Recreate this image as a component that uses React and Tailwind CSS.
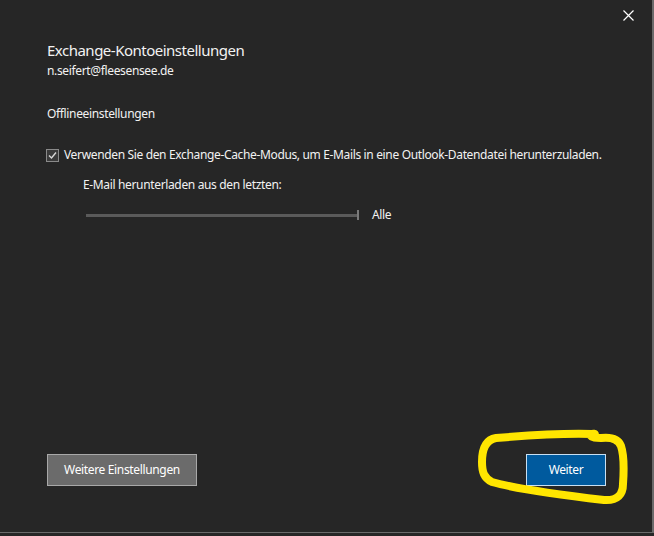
function Annotation() {
  // freehand yellow marker around the primary button
  return (
    <svg
      className="absolute left-0 top-0 pointer-events-none"
      width="654"
      height="536"
      viewBox="0 0 654 536"
    >
      <path
        d="M592 434 C560 433 520 436 496 438 C484 440 482 452 482 462 C482 472 484 478 492 482 C520 490 570 496 604 500 C618 501 623 494 623 484 C624 470 624 455 621 446 C618 438 610 437 601 438 C596 438 592 438 590 435 C588 433 600 434 592 434"
        fill="none"
        stroke="#ffe600"
        strokeWidth="8"
        strokeLinecap="round"
        strokeLinejoin="round"
      />
    </svg>
  )
}

export default function App() {
  return (
    <div
      className="relative w-[654px] h-[536px] bg-[#262626] text-[#f2f2f2] overflow-hidden"
      style={{ fontFamily: '"Segoe UI", "Noto Sans", sans-serif' }}
    >
      <div className="flex flex-col h-[533px] w-[652px] border-b border-[#6a6a6a]">
        {/* title bar */}
        <div className="flex justify-end h-[32px] pr-[18px] pt-[10px]">
          <svg width="11" height="11" viewBox="0 0 11 11">
            <path d="M0.5 0.5 L10.5 10.5 M10.5 0.5 L0.5 10.5" stroke="#ffffff" strokeWidth="1.2" />
          </svg>
        </div>

        <div className="flex flex-col flex-1 pl-[47px]">
          <h1 className="text-[15px] leading-[20px] mt-[8px] tracking-[-0.5px]">Exchange-Kontoeinstellungen</h1>
          <p className="text-[12px] leading-[16px] mt-[3px] tracking-[-0.35px]">n.seifert@fleesensee.de</p>

          <p className="text-[12px] leading-[16px] mt-[27px] tracking-[-0.35px]">Offlineeinstellungen</p>

          <label className="flex items-center gap-[5px] mt-[25px] -ml-[1px] text-[12px] leading-[16px] tracking-[-0.35px]">
            <span className="w-[13px] h-[13px] border border-[#8a8a8a] bg-[#3a3a3a] flex items-center justify-center">
              <svg width="11" height="11" viewBox="0 0 11 11">
                <path d="M2 5.5 L4.5 8 L9 2.5" fill="none" stroke="#d8d8d8" strokeWidth="1.4" />
              </svg>
            </span>
            Verwenden Sie den Exchange-Cache-Modus, um E-Mails in eine Outlook-Datendatei herunterzuladen.
          </label>

          <p className="text-[12px] leading-[16px] mt-[14px] ml-[36px] tracking-[-0.35px]">E-Mail herunterladen aus den letzten:</p>

          <div className="flex items-center mt-[14px] ml-[39px]">
            <div className="relative w-[273px] h-[10px] flex items-center">
              <div className="w-full h-[3px] bg-[#5a5a5a]" />
              <div className="absolute right-0 top-0 w-[2px] h-[10px] bg-[#7a7a7a]" />
            </div>
            <span className="text-[12px] leading-[16px] ml-[13px] tracking-[-0.35px]">Alle</span>
          </div>

          <div className="flex-1" />

          <div className="flex items-center justify-between pr-[46px] mb-[46px]">
            <button className="w-[150px] h-[32px] bg-[#6b6b6b] border border-[#a8a8a8] text-[12px] tracking-[-0.35px] text-white">
              Weitere Einstellungen
            </button>
            <button className="w-[80px] h-[32px] bg-[#005a9e] border border-[#c8dff2] text-[12px] tracking-[-0.35px] text-white">
              Weiter
            </button>
          </div>
        </div>
      </div>
      <div className="absolute right-0 top-0 w-[2px] h-[533px] bg-[#6a6a6a]" />
      <Annotation />
    </div>
  )
}
